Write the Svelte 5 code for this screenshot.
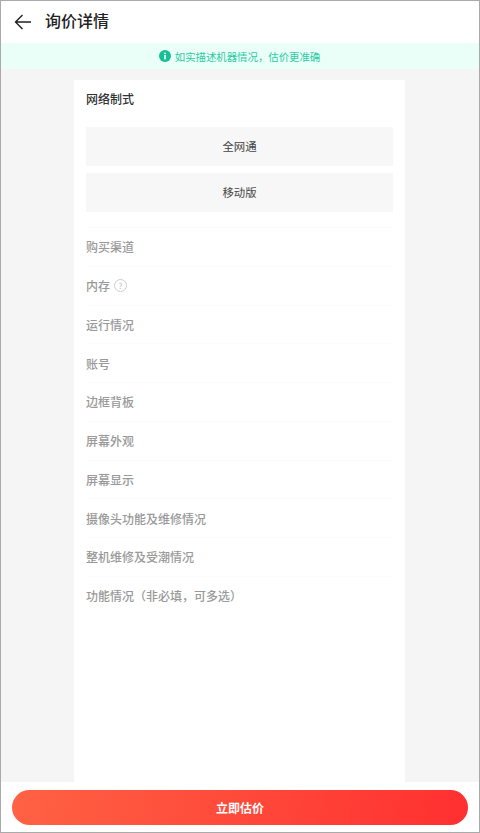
<script>
  const rows = ['购买渠道','内存','运行情况','账号','边框背板','屏幕外观','屏幕显示','摄像头功能及维修情况','整机维修及受潮情况','功能情况（非必填，可多选）'];
</script>

<div class="page">
  <header class="top">
    <svg class="back" viewBox="0 0 18 16" width="18" height="16" fill="none" stroke="#222" stroke-width="1.4">
      <path d="M17 8H1.5M8.5 1L1.5 8l7 7"/>
    </svg>
    <h1>询价详情</h1>
  </header>
  <div class="notice">
    <svg viewBox="0 0 12 12" width="12" height="12">
      <circle cx="6" cy="6" r="6" fill="#16bf94"/>
      <rect x="5.2" y="5" width="1.6" height="4.4" fill="#fff"/>
      <rect x="5.2" y="2.6" width="1.6" height="1.5" fill="#fff"/>
    </svg>
    <span>如实描述机器情况，估价更准确</span>
  </div>
  <main class="body">
    <section class="card">
      <div class="title">网络制式</div>
      <div class="opt">全网通</div>
      <div class="opt">移动版</div>
      <div class="rows">
        {#each rows as r}
          <div class="row">
            <span>{r}</span>
            {#if r === '内存'}<i class="q">?</i>{/if}
          </div>
        {/each}
      </div>
    </section>
  </main>
  <footer class="foot">
    <button>立即估价</button>
  </footer>
</div>

<style>
  :global(body) { margin: 0; }
  .page {
    box-sizing: border-box;
    width: 480px;
    height: 833px;
    display: flex;
    flex-direction: column;
    border: 1px solid #aaa;
    background: #f5f5f5;
    font-family: "Noto Sans CJK SC", "Noto Sans", sans-serif;
    overflow: hidden;
  }
  .top {
    height: 42px;
    flex: none;
    background: #fff;
    display: flex;
    align-items: center;
    padding-left: 13px;
    gap: 13px;
  }
  .back { flex: none; margin-top: -1px; }
  h1 {
    margin: -4px 0 0;
    font-size: 16px;
    font-weight: 500;
    color: #222;
  }
  .notice {
    height: 26px;
    flex: none;
    background: #ebfff9;
    display: flex;
    align-items: center;
    justify-content: center;
    gap: 4px;
    font-size: 10.4px;
    color: #2ccba3;
    padding-right: 1px;
  }
  .body {
    flex: 1;
    min-height: 0;
    padding-top: 11px;
    display: flex;
    justify-content: center;
  }
  .card {
    box-sizing: border-box;
    width: 331px;
    margin-right: 1px;
    background: #fff;
    padding: 0 12px;
  }
  .title {
    height: 38px;
    line-height: 38px;
    font-size: 12px;
    font-weight: 500;
    color: #333;
    margin-bottom: 9px;
  }
  .opt {
    height: 39px;
    line-height: 39px;
    background: #f7f7f7;
    text-align: center;
    font-size: 11.4px;
    color: #444;
    margin-bottom: 7px;
  }
  .rows { margin-top: 15px; }
  .row {
    height: 38.75px;
    box-sizing: border-box;
    border-top: 1px solid #fbfbfb;
    display: flex;
    align-items: center;
    gap: 4px;
    font-size: 12px;
    font-weight: 500;
    color: #999;
  }
  .q {
    width: 11px;
    height: 11px;
    border: 1px solid #ccc;
    border-radius: 50%;
    font-size: 8px;
    font-style: normal;
    font-weight: 400;
    line-height: 11px;
    text-align: center;
    color: #bbb;
  }
  .foot {
    height: 50px;
    flex: none;
    background: #fff;
    padding: 8px 11px 0;
    box-sizing: border-box;
  }
  button {
    display: block;
    width: 456px;
    height: 35px;
    border: 0;
    padding: 0;
    border-radius: 18px;
    background: linear-gradient(100deg, #ff6244, #ff3030);
    color: #fff;
    font: inherit;
    font-size: 12px;
    font-weight: 700;
  }
</style>
